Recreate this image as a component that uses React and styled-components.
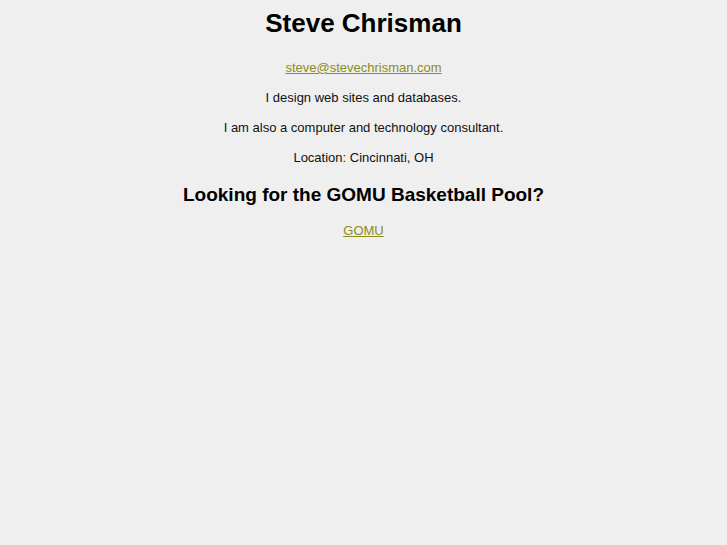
import React from 'react';
import styled, { createGlobalStyle } from 'styled-components';

const GlobalStyle = createGlobalStyle`
    html, body {
        margin: 0;
        padding: 0;
        background: #efefef;
    }
    body {
        font-family: "Liberation Sans", Arial, sans-serif;
        color: #111;
    }
`;

const Page = styled.div`
    display: flex;
    flex-direction: column;
    align-items: center;
    padding-top: 8px;
    text-align: center;
`;

const Name = styled.h1`
    font-size: 26px;
    font-weight: bold;
    margin: 0 0 21px;
    color: #000;
`;

const Line = styled.p`
    font-size: 13px;
    line-height: 16px;
    margin: 0 0 14px;
`;

const SubHeading = styled.h2`
    font-size: 19px;
    font-weight: bold;
    margin: 4px 0 17px;
    color: #000;
`;

const MailLink = styled.a`
    color: #8c8c1c;
    text-decoration: underline;
`;

export default function App() {
    return (
        <>
            <GlobalStyle />
            <Page>
                <Name>Steve Chrisman</Name>
                <Line><MailLink href="mailto:steve@stevechrisman.com">steve@stevechrisman.com </MailLink></Line>
                <Line>I design web sites and databases.</Line>
                <Line>I am also a computer and technology consultant.</Line>
                <Line>Location: Cincinnati, OH</Line>
                <SubHeading>Looking for the GOMU Basketball Pool?</SubHeading>
                <Line><MailLink href="#">GOMU</MailLink></Line>
            </Page>
        </>
    );
}
